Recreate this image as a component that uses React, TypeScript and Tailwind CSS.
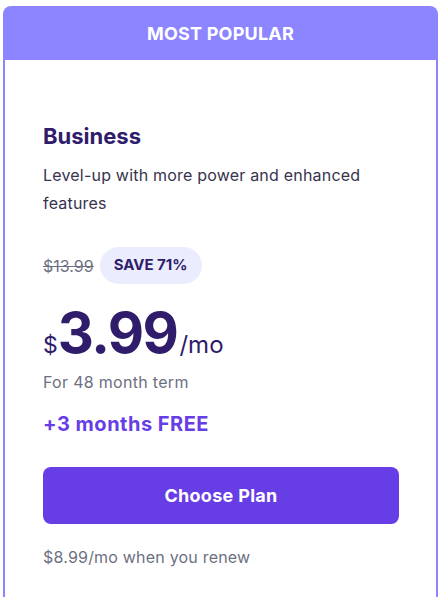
import React from "react";

export default function App() {
  return (
    <div className="w-[439px] h-[597px] bg-white overflow-hidden pt-[6px] pl-[3px]" style={{ fontFamily: "Inter, 'Noto Sans', sans-serif" }}>
      <div className="w-[435px] h-[620px] rounded-t-[8px] bg-[#8c85ff] flex flex-col">
        <div className="h-[54px] flex items-center justify-center text-white font-bold text-[18px] tracking-[0.2px]">
          MOST POPULAR
        </div>
        <div className="flex-1 mx-[2px] bg-white px-[38px] pt-[62px] flex flex-col">
          <div className="text-[22px] font-bold text-[#2f1c6a] leading-[28px]">Business</div>
          <div className="mt-[11px] text-[16px] leading-[28px] text-[#36344d] tracking-[0.2px]">
            Level-up with more power and enhanced features
          </div>
          <div className="mt-[30px] flex items-center gap-[6px]">
            <span className="text-[16px] text-[#6d7081] line-through">$13.99</span>
            <span className="h-[37px] px-[14px] rounded-full bg-[#ebecfe] text-[#2f1c6a] font-bold text-[15px] flex items-center">SAVE 71%</span>
          </div>
          <div className="mt-[18px] flex items-baseline text-[#2f1c6a] h-[62px]">
            <span className="text-[23px] text-[#2f1c6a]">$</span>
            <span className="text-[56px] font-bold leading-[62px] tracking-[-1.5px]">3.99</span>
            <span className="text-[24px] ml-[2px]">/mo</span>
          </div>
          <div className="mt-[6px] text-[16px] text-[#6d7081] leading-[24px] tracking-[0.3px]">For 48 month term</div>
          <div className="mt-[16px] text-[20px] font-bold text-[#673de6] leading-[28px] tracking-[0.5px]">+3 months FREE</div>
          <button className="mt-[29px] h-[57px] w-[356px] rounded-[8px] bg-[#673de6] text-white font-bold text-[18px] tracking-[0.3px]">
            Choose Plan
          </button>
          <div className="mt-[21px] text-[16px] text-[#6d7081] leading-[24px] tracking-[0.2px]">$8.99/mo when you renew</div>
        </div>
      </div>
    </div>
  );
}
